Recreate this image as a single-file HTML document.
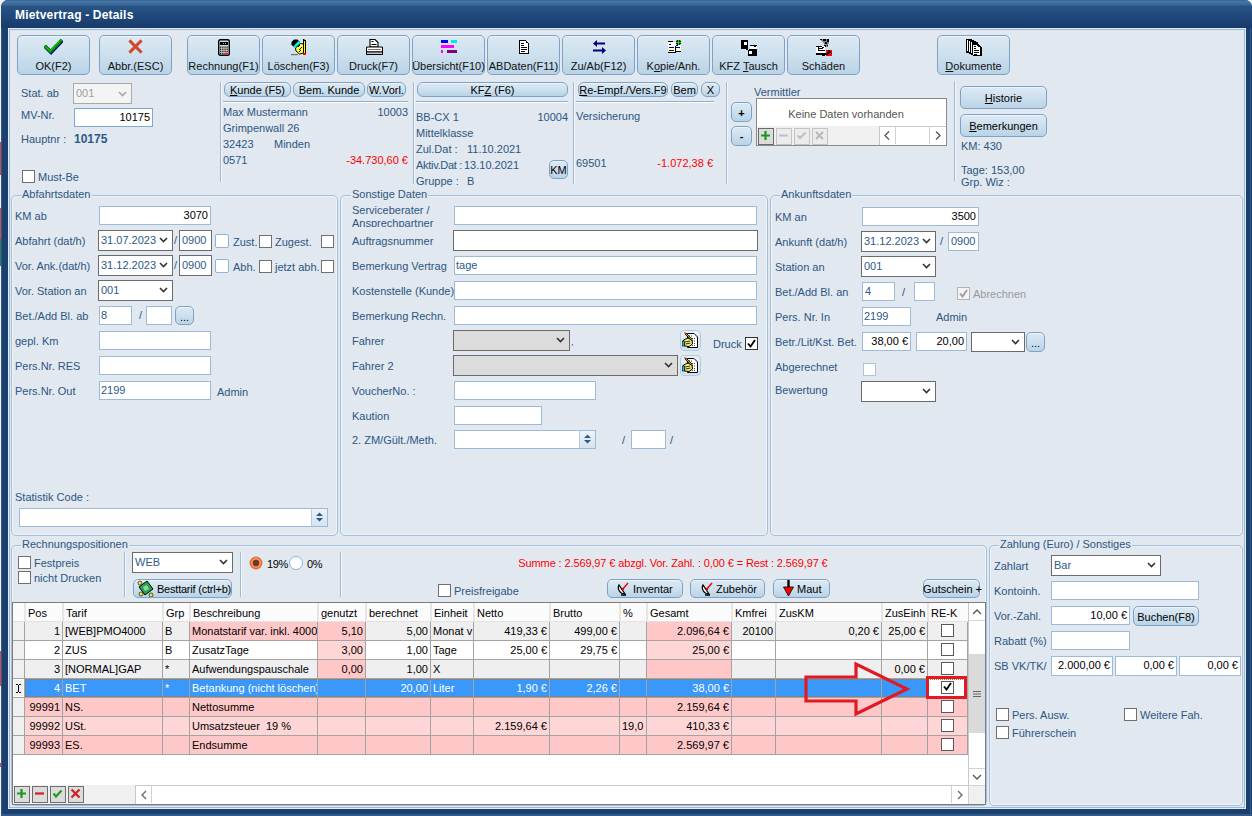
<!DOCTYPE html><html><head><meta charset="utf-8"><style>
*{box-sizing:content-box}
html,body{margin:0;padding:0;width:1252px;height:816px;overflow:hidden;background:#f0f0f0;font-family:"Liberation Sans", sans-serif}
.t{position:absolute;white-space:nowrap;line-height:13px;font-size:11px}
.btn{position:absolute;border:1px solid #7ca3c7;background:linear-gradient(#dce9f3,#cde0ee 50%,#b9d3e6);box-shadow:inset 0 1px 0 #eef5fa}
.grp{position:absolute;border:1px solid #a3bfd9;border-radius:5px;box-shadow:inset 0 0 0 1px #eef4f9}
.ico{position:absolute;line-height:0}
</style></head><body>

<div style="position:absolute;left:0px;top:0px;width:1252px;height:816px;background:#f2f2f2"></div>
<div style="position:absolute;left:0px;top:142px;width:1px;height:33px;background:#d04848"></div>
<div style="position:absolute;left:0px;top:208px;width:1px;height:31px;background:#d05050"></div>
<div style="position:absolute;left:0px;top:239px;width:1px;height:27px;background:#2a7a5a"></div>
<div style="position:absolute;left:0px;top:651px;width:1px;height:35px;background:#d84848"></div>
<div style="position:absolute;left:0px;top:763px;width:1px;height:4px;background:#d84848"></div>
<div style="position:absolute;left:1px;top:0px;width:1251px;height:816px;background:#1b3f6e;border-radius:7px 7px 0 0"></div>
<div style="position:absolute;left:1px;top:0px;width:1251px;height:28px;background:linear-gradient(#2b5580 0px,#4a7aaa 1px,#3f6e9e 3px,#3a699a 5px,#285483 6px,#234d7f 12px,#1d4476 20px,#173a69 28px);border-radius:7px 7px 0 0"></div>
<div style="position:absolute;left:1px;top:28px;width:1px;height:788px;background:#2f5a8a"></div>
<div style="position:absolute;left:1250px;top:28px;width:1px;height:788px;background:#2f5a8a"></div>
<div style="position:absolute;left:1px;top:814px;width:1251px;height:2px;background:#2f5a8a"></div>
<div class="t" style="left:15px;top:9px;color:#ffffff;font-weight:bold;font-size:12px;letter-spacing:0.18px">Mietvertrag - Details</div>
<div style="position:absolute;left:8px;top:28px;width:1238px;height:781px;background:#e4eef7"></div>
<div style="position:absolute;left:9px;top:29px;width:1236px;height:779px;background:#97b7d6"></div>
<div style="position:absolute;left:10px;top:30px;width:1234px;height:777px;background:#e1e8f0"></div>
<div class="btn" style="left:17px;top:35px;width:71px;height:38px;border-radius:5px"></div>
<div class="t" style="left:-246.5px;width:600px;text-align:center;top:60px;color:#111;font-size:11px;">OK(F2)</div>
<div class="btn" style="left:99px;top:35px;width:71px;height:38px;border-radius:5px"></div>
<div class="t" style="left:-164.5px;width:600px;text-align:center;top:60px;color:#111;font-size:11px;">Abbr.(ESC)</div>
<div class="btn" style="left:187px;top:35px;width:71px;height:38px;border-radius:5px"></div>
<div class="t" style="left:-76.5px;width:600px;text-align:center;top:60px;color:#111;font-size:11px;">Rechnung(F1)</div>
<div class="btn" style="left:262px;top:35px;width:71px;height:38px;border-radius:5px"></div>
<div class="t" style="left:-1.5px;width:600px;text-align:center;top:60px;color:#111;font-size:11px;">Löschen(F3)</div>
<div class="btn" style="left:337px;top:35px;width:71px;height:38px;border-radius:5px"></div>
<div class="t" style="left:73.5px;width:600px;text-align:center;top:60px;color:#111;font-size:11px;">Druck(F7)</div>
<div class="btn" style="left:412px;top:35px;width:71px;height:38px;border-radius:5px"></div>
<div class="t" style="left:148.5px;width:600px;text-align:center;top:60px;color:#111;font-size:11px;">Übersicht(F10)</div>
<div class="btn" style="left:487px;top:35px;width:71px;height:38px;border-radius:5px"></div>
<div class="t" style="left:223.5px;width:600px;text-align:center;top:60px;color:#111;font-size:11px;">ABDaten(F11)</div>
<div class="btn" style="left:562px;top:35px;width:71px;height:38px;border-radius:5px"></div>
<div class="t" style="left:298.5px;width:600px;text-align:center;top:60px;color:#111;font-size:11px;">Zu/Ab(F12)</div>
<div class="btn" style="left:637px;top:35px;width:71px;height:38px;border-radius:5px"></div>
<div class="t" style="left:373.5px;width:600px;text-align:center;top:60px;color:#111;font-size:11px;">K<u>o</u>pie/Anh.</div>
<div class="btn" style="left:712px;top:35px;width:71px;height:38px;border-radius:5px"></div>
<div class="t" style="left:448.5px;width:600px;text-align:center;top:60px;color:#111;font-size:11px;">KFZ <u>T</u>ausch</div>
<div class="btn" style="left:787px;top:35px;width:71px;height:38px;border-radius:5px"></div>
<div class="t" style="left:523.5px;width:600px;text-align:center;top:60px;color:#111;font-size:11px;">Schäden</div>
<div class="btn" style="left:937px;top:35px;width:71px;height:38px;border-radius:5px"></div>
<div class="t" style="left:673.5px;width:600px;text-align:center;top:60px;color:#111;font-size:11px;"><u>D</u>okumente</div>
<div class="ico" style="left:44px;top:38px"><svg width="19" height="17" viewBox="0 0 19 17"><path d="M2.2 9.6 L7 14.4 L17.2 3.8" stroke="#000080" stroke-width="3.6" fill="none" stroke-linecap="square"/><path d="M1.6 9 L6.4 13.6 L16.6 3" stroke="#0a8a0a" stroke-width="3.2" fill="none" stroke-linecap="square"/><path d="M1.2 8.4 L6.2 12.8 L16.2 2.4" stroke="#00e000" stroke-width="1" fill="none"/></svg></div>
<div class="ico" style="left:128px;top:39px"><svg width="15" height="15" viewBox="0 0 15 15"><path d="M2.5 2.5 L12.5 12.5 M12.5 2.5 L2.5 12.5" stroke="#d4482a" stroke-width="3.1" stroke-linecap="square"/></svg></div>
<div class="ico" style="left:218px;top:39px"><svg width="12" height="17" viewBox="0 0 12 17"><rect x="0.7" y="0.7" width="10.6" height="15.6" rx="1.5" fill="#d8d8d8" stroke="#000" stroke-width="1.4"/><rect x="2" y="3" width="8" height="3" fill="#000"/><rect x="5" y="4" width="1" height="1" fill="#0ff"/><rect x="7" y="4" width="1" height="1" fill="#0ff"/><g fill="#111"><rect x="2" y="7.5" width="1.3" height="1.3"/><rect x="4.2" y="7.5" width="1.3" height="1.3"/><rect x="6.4" y="7.5" width="1.3" height="1.3"/><rect x="8.5" y="7.5" width="1.3" height="1.3"/><rect x="2" y="9.6" width="1.3" height="1.3"/><rect x="4.2" y="9.6" width="1.3" height="1.3"/><rect x="6.4" y="9.6" width="1.3" height="1.3"/><rect x="8.5" y="9.6" width="1.3" height="1.3"/><rect x="2" y="11.7" width="1.3" height="1.3"/><rect x="4.2" y="11.7" width="1.3" height="1.3"/><rect x="6.4" y="11.7" width="1.3" height="1.3"/><rect x="8.5" y="11.7" width="1.3" height="1.3"/><rect x="2" y="13.8" width="1.3" height="1.3"/><rect x="4.2" y="13.8" width="1.3" height="1.3"/></g><rect x="6.2" y="13.8" width="3.6" height="1.3" fill="#f00"/></svg></div>
<div class="ico" style="left:291px;top:39px"><svg width="17" height="17" viewBox="0 0 17 17"><path d="M0.5 3 L3 0.5 L6.5 0.5 L9 3 L4 8.5 L0.5 6 Z" fill="#000"/><path d="M2.5 7 L7.5 2 L10 4.5 L5 9.5 Z" fill="#00f0f0"/><path d="M4.5 9 L9.5 4.5 L12.5 5 L12.5 14 L8.5 15 L5 12 Z" fill="#ffff40" stroke="#000" stroke-width="1"/><path d="M7 8 L9 6 M8 11 L11 8 M8 13 L10 11" stroke="#000" stroke-width="1"/><rect x="12.5" y="1.5" width="2" height="13" fill="#ffff00" stroke="#000" stroke-width="1"/><rect x="12" y="0" width="1.5" height="2" fill="#000"/><rect x="12" y="14" width="3" height="2" fill="#ff0000"/><rect x="0" y="15" width="7" height="1.2" fill="#707070"/></svg></div>
<div class="ico" style="left:366px;top:39px"><svg width="17" height="16" viewBox="0 0 17 16"><path d="M4 0.5 L9 0.5 L12 3.5 L12 8 L4 8 Z" fill="#fff" stroke="#000" stroke-width="1.1"/><rect x="5.5" y="2" width="2" height="1" fill="#000"/><rect x="5.5" y="5" width="5" height="1" fill="#000"/><rect x="0.5" y="8" width="16" height="5" rx="1" fill="#fff" stroke="#000" stroke-width="1.1"/><rect x="2" y="10" width="12" height="1" fill="#777"/><rect x="13.5" y="10" width="1" height="1" fill="#e00"/><rect x="0.5" y="13" width="16" height="2.5" fill="#ccc" stroke="#000" stroke-width="1"/></svg></div>
<div class="ico" style="left:441px;top:40px"><svg width="17" height="14" viewBox="0 0 17 14"><rect x="0" y="0" width="7" height="3" fill="#0000ee"/><rect x="10" y="0" width="6" height="3" fill="#00e8f0"/><rect x="0" y="5" width="13" height="3" fill="#ff00ff"/><rect x="0" y="10" width="2" height="3" fill="#ff00ff"/><rect x="6" y="10" width="10" height="3" fill="#800080"/></svg></div>
<div class="ico" style="left:519px;top:40px"><svg width="11" height="14" viewBox="0 0 11 14" shape-rendering="crispEdges"><path d="M0 0 H7 V1 H8 V2 H9 V3 H10 V14 H0 Z" fill="#000"/><path d="M1 1 H7 V3 H9 V13 H1 Z" fill="#fff"/><g fill="#000"><rect x="2" y="3" width="3" height="1"/><rect x="2" y="5" width="3" height="1"/><rect x="2" y="7" width="6" height="1"/><rect x="2" y="9" width="6" height="1"/><rect x="2" y="11" width="4" height="1"/><rect x="7" y="2" width="1" height="1"/></g></svg></div>
<div class="ico" style="left:593px;top:40px"><svg width="13" height="14" viewBox="0 0 13 14"><path d="M0 3.5 L4 0 L4 2.5 L12 2.5 L12 4.5 L4 4.5 L4 7 Z" fill="#000080"/><path d="M13 10.5 L9 7 L9 9.5 L0 9.5 L0 11.5 L9 11.5 L9 14 Z" fill="#000080"/></svg></div>
<div class="ico" style="left:668px;top:40px"><svg width="14" height="14" viewBox="0 0 14 14" shape-rendering="crispEdges"><rect x="0" y="1" width="5" height="1" fill="#000"/><rect x="0" y="2" width="8" height="10" fill="#fff"/><rect x="0" y="12" width="8" height="1" fill="#000"/><rect x="7" y="6" width="1" height="7" fill="#000"/><rect x="8" y="4" width="5" height="7" fill="#fff"/><rect x="8" y="11" width="5" height="1" fill="#000"/><g fill="#000080"><rect x="1" y="4" width="2" height="1"/><rect x="1" y="7" width="5" height="1"/><rect x="1" y="10" width="5" height="1"/><rect x="8" y="7" width="4" height="1"/><rect x="8" y="5" width="2" height="1"/></g><g fill="#ffff00"><rect x="2" y="2" width="1" height="1"/><rect x="0" y="8" width="1" height="1"/><rect x="2" y="9" width="1" height="1"/><rect x="5" y="9" width="1" height="1"/><rect x="0" y="11" width="1" height="1"/><rect x="8" y="9" width="1" height="1"/><rect x="11" y="8" width="1" height="1"/></g><rect x="8" y="0" width="5" height="5" rx="2" fill="#000" shape-rendering="auto"/><rect x="10" y="0" width="1" height="5" fill="#00f000"/><rect x="8" y="2" width="5" height="1" fill="#00f000"/></svg></div>
<div class="ico" style="left:741px;top:39px"><svg width="17" height="17" viewBox="0 0 17 17" shape-rendering="crispEdges"><rect x="0" y="1" width="7" height="9" fill="#000"/><rect x="3" y="3" width="3" height="3" fill="#fff"/><rect x="5" y="9" width="2" height="2" fill="#000"/><rect x="9" y="6" width="7" height="1" fill="#000"/><rect x="9" y="7" width="7" height="3" fill="#fff"/><rect x="8" y="10" width="8" height="7" fill="#000"/><rect x="7" y="11" width="2" height="6" fill="#000"/><rect x="8" y="12" width="3" height="3" fill="#fff"/><rect x="13" y="6" width="2" height="2" fill="#000"/></svg></div>
<div class="ico" style="left:816px;top:38px"><svg width="17" height="18" viewBox="0 0 17 18" shape-rendering="crispEdges"><path d="M4 1 H13 V4 L12 9 H10 L8 6 L6 4 L4 2 Z" fill="#888"/><g fill="#000"><rect x="4" y="1" width="2" height="1"/><rect x="7" y="1" width="3" height="2"/><rect x="11" y="1" width="2" height="3"/><rect x="9" y="4" width="2" height="2"/><rect x="8" y="7" width="2" height="2"/><rect x="11" y="7" width="1" height="1"/></g><rect x="0" y="8" width="9" height="8" fill="#fff"/><rect x="0" y="8" width="6" height="1" fill="#000"/><rect x="2" y="9" width="1" height="4" fill="#000"/><rect x="3" y="10" width="4" height="1" fill="#000"/><rect x="3" y="12" width="6" height="1" fill="#000"/><rect x="6" y="9" width="2" height="1" fill="#000"/><rect x="0" y="15" width="10" height="2" fill="#000"/><rect x="6" y="17" width="3" height="1" fill="#000"/><path d="M10 12 H16 V18 H10 Z" fill="#f00"/><g fill="#000"><rect x="12" y="12" width="2" height="1"/><rect x="11" y="14" width="2" height="2"/><rect x="13" y="13" width="2" height="2"/><rect x="15" y="15" width="1" height="1"/><rect x="10" y="16" width="2" height="1"/></g></svg></div>
<div class="ico" style="left:966px;top:39px"><svg width="17" height="17" viewBox="0 0 17 17" shape-rendering="crispEdges"><path d="M0 0 H6 V1 H8 V2 H10 V3 H12 V5 H13 V6 H14 V7 H15 V8 H16 V17 H7 V16 H5 V15 H3 V14 H0 Z" fill="#000"/><rect x="1" y="1" width="1" height="11" fill="#fff"/><rect x="3" y="2" width="1" height="11" fill="#fff"/><rect x="5" y="3" width="1" height="11" fill="#fff"/><path d="M7 6 H11 V7 H12 V8 H14 V16 H7 Z" fill="#fff"/><g fill="#000"><rect x="8" y="7" width="2" height="1"/><rect x="8" y="9" width="2" height="1"/><rect x="8" y="11" width="5" height="1"/><rect x="8" y="13" width="5" height="1"/><rect x="8" y="15" width="3" height="1"/></g></svg></div>
<div class="t" style="left:21px;top:87px;color:#2d5682;font-size:11px;">Stat. ab</div>
<div style="position:absolute;left:73px;top:83px;width:57px;height:19px;border:1px solid #a9a9a9;background:#f4f4f4"></div>
<div class="ico" style="left:118px;top:91px"><svg width="9" height="6" viewBox="0 0 9 6"><path d="M1 1 L4.5 4.5 L8 1" stroke="#a8a8a8" stroke-width="1.6" fill="none"/></svg></div>
<div class="t" style="left:76px;top:87px;color:#a0a0a0;font-size:11px;">001</div>
<div class="t" style="left:21px;top:109px;color:#2d5682;font-size:11px;">MV-Nr.</div>
<div style="position:absolute;left:74px;top:108px;width:77px;height:17px;border:1px solid #7fa7cf;background:#fff"></div>
<div class="t" style="right:1102px;top:111px;color:#000;font-size:11px;">10175</div>
<div class="t" style="left:21px;top:133px;color:#2d5682;font-size:11px;">Hauptnr :</div>
<div class="t" style="left:74px;top:133px;color:#2d5a88;font-weight:bold;font-size:12px;">10175</div>
<div style="position:absolute;left:22px;top:170px;width:11px;height:11px;border:1px solid #707070;background:#fff;border-radius:0px"></div>
<div class="t" style="left:38px;top:171px;color:#2d5682;font-size:11px;">Must-Be</div>
<div style="position:absolute;left:220px;top:82px;width:1px;height:100px;background:#9db9d5;box-shadow:1px 0 0 #f4f8fb"></div>
<div style="position:absolute;left:413px;top:82px;width:1px;height:102px;background:#9db9d5;box-shadow:1px 0 0 #f4f8fb"></div>
<div style="position:absolute;left:573px;top:82px;width:1px;height:102px;background:#9db9d5;box-shadow:1px 0 0 #f4f8fb"></div>
<div style="position:absolute;left:726px;top:82px;width:1px;height:102px;background:#9db9d5;box-shadow:1px 0 0 #f4f8fb"></div>
<div style="position:absolute;left:954px;top:81px;width:1px;height:100px;background:#9db9d5;box-shadow:1px 0 0 #f4f8fb"></div>
<div class="btn" style="left:224px;top:82px;width:65px;height:13px;border-radius:6px"></div>
<div class="t" style="left:-42.5px;width:600px;text-align:center;top:84px;color:#000;font-size:11px;"><u>K</u>unde (F5)</div>
<div class="btn" style="left:293px;top:82px;width:70px;height:13px;border-radius:6px"></div>
<div class="t" style="left:29px;width:600px;text-align:center;top:84px;color:#000;font-size:11px;">Bem. Kunde</div>
<div class="btn" style="left:367px;top:82px;width:37px;height:13px;border-radius:6px"></div>
<div class="t" style="left:86.5px;width:600px;text-align:center;top:84px;color:#000;font-size:11px;">W.Vorl.</div>
<div style="position:absolute;left:223px;top:101px;width:185px;height:1px;background:#8eb0d0;box-shadow:0 1px 0 #fbfdff"></div>
<div class="t" style="left:223px;top:106px;color:#2d5682;font-size:11px;">Max Mustermann</div>
<div class="t" style="right:844px;top:106px;color:#2d5682;font-size:11px;">10003</div>
<div class="t" style="left:223px;top:122px;color:#2d5682;font-size:11px;">Grimpenwall 26</div>
<div class="t" style="left:223px;top:138px;color:#2d5682;font-size:11px;">32423</div>
<div class="t" style="left:274px;top:138px;color:#2d5682;font-size:11px;">Minden</div>
<div class="t" style="left:223px;top:154px;color:#2d5682;font-size:11px;">0571</div>
<div class="t" style="right:844px;top:154px;color:#ff0000;font-size:11px;">-34.730,60 €</div>
<div class="btn" style="left:417px;top:82px;width:149px;height:13px;border-radius:6px"></div>
<div class="t" style="left:192.5px;width:600px;text-align:center;top:84px;color:#000;font-size:11px;">KF<u>Z</u> (F6)</div>
<div style="position:absolute;left:416px;top:101px;width:152px;height:1px;background:#8eb0d0;box-shadow:0 1px 0 #fbfdff"></div>
<div class="t" style="left:416px;top:111px;color:#2d5682;font-size:11px;">BB-CX 1</div>
<div class="t" style="right:684px;top:111px;color:#2d5682;font-size:11px;">10004</div>
<div class="t" style="left:416px;top:127px;color:#2d5682;font-size:11px;">Mittelklasse</div>
<div class="t" style="left:416px;top:143px;color:#2d5682;font-size:11px;">Zul.Dat :</div>
<div class="t" style="left:467px;top:143px;color:#2d5682;font-size:11px;">11.10.2021</div>
<div class="t" style="left:416px;top:159px;color:#2d5682;font-size:11px;letter-spacing:-0.3px">Aktiv.Dat :</div>
<div class="t" style="left:464px;top:159px;color:#2d5682;font-size:11px;">13.10.2021</div>
<div class="t" style="left:416px;top:175px;color:#2d5682;font-size:11px;">Gruppe :</div>
<div class="t" style="left:467px;top:175px;color:#2d5682;font-size:11px;">B</div>
<div class="btn" style="left:549px;top:160px;width:17px;height:17px;border-radius:5px"></div>
<div class="t" style="left:258.5px;width:600px;text-align:center;top:164px;color:#000;font-size:11px;">KM</div>
<div class="btn" style="left:578px;top:82px;width:88px;height:13px;border-radius:6px"></div>
<div class="t" style="left:323px;width:600px;text-align:center;top:84px;color:#000;font-size:11px;"><u>R</u>e-Empf./Vers.F9</div>
<div class="btn" style="left:671px;top:82px;width:25px;height:13px;border-radius:6px"></div>
<div class="t" style="left:384.5px;width:600px;text-align:center;top:84px;color:#000;font-size:11px;">Bem</div>
<div class="btn" style="left:701px;top:82px;width:17px;height:13px;border-radius:6px"></div>
<div class="t" style="left:410.5px;width:600px;text-align:center;top:84px;color:#000;font-size:11px;">X</div>
<div style="position:absolute;left:576px;top:101px;width:138px;height:1px;background:#8eb0d0;box-shadow:0 1px 0 #fbfdff"></div>
<div class="t" style="left:576px;top:110px;color:#2d5682;font-size:11px;">Versicherung</div>
<div class="t" style="left:576px;top:157px;color:#2d5682;font-size:11px;">69501</div>
<div class="t" style="right:539px;top:157px;color:#ff0000;font-size:11px;">-1.072,38 €</div>
<div class="btn" style="left:731px;top:102px;width:19px;height:18px;border-radius:5px"></div>
<div class="t" style="left:441.5px;width:600px;text-align:center;top:107px;color:#000;font-weight:bold;font-size:11px;">+</div>
<div class="btn" style="left:731px;top:126px;width:19px;height:18px;border-radius:5px"></div>
<div class="t" style="left:441.5px;width:600px;text-align:center;top:130px;color:#000;font-weight:bold;font-size:11px;">-</div>
<div class="t" style="left:754px;top:86px;color:#2d5682;font-size:11px;">Vermittler</div>
<div style="position:absolute;left:756px;top:98px;width:189px;height:46px;border:1px solid #8a8a8a;background:#fff"></div>
<div class="t" style="left:546px;width:600px;text-align:center;top:108px;color:#555;font-size:11px;">Keine Daten vorhanden</div>
<div style="position:absolute;left:757px;top:126px;width:189px;height:19px;background:#f0f0f0"></div>
<div style="position:absolute;left:758px;top:128px;width:14px;height:15px;border:1px solid #6a6a6a;background:#dcdcdc"></div>
<div class="ico" style="left:760px;top:130px"><svg width="11" height="11" viewBox="0 0 11 11"><path d="M5.5 1 V10 M1 5.5 H10" stroke="#1a9a1a" stroke-width="2.2"/></svg></div>
<div style="position:absolute;left:776px;top:128px;width:14px;height:15px;border:1px solid #c4c4c4;background:#ececec"></div>
<div style="position:absolute;left:794px;top:128px;width:14px;height:15px;border:1px solid #c4c4c4;background:#ececec"></div>
<div style="position:absolute;left:812px;top:128px;width:14px;height:15px;border:1px solid #c4c4c4;background:#ececec"></div>
<div class="ico" style="left:778px;top:130px"><svg width="11" height="11" viewBox="0 0 11 11"><path d="M1 5.5 H10" stroke="#c0c0c0" stroke-width="2"/></svg></div>
<div class="ico" style="left:796px;top:130px"><svg width="11" height="11" viewBox="0 0 11 11"><path d="M1.5 5.5 L4 8 L9.5 2.5" stroke="#c0c0c0" stroke-width="2" fill="none"/></svg></div>
<div class="ico" style="left:814px;top:130px"><svg width="11" height="11" viewBox="0 0 11 11"><path d="M2 2 L9 9 M9 2 L2 9" stroke="#b8b8b8" stroke-width="2"/></svg></div>
<div style="position:absolute;left:879px;top:126px;width:66px;height:18px;background:#fff;border-left:1px solid #c8c8c8;border-top:1px solid #c8c8c8"></div>
<div style="position:absolute;left:895px;top:126px;width:1px;height:18px;background:#d0d0d0"></div>
<div style="position:absolute;left:929px;top:126px;width:1px;height:18px;background:#d0d0d0"></div>
<div class="ico" style="left:884px;top:131px"><svg width="6" height="9" viewBox="0 0 6 9"><path d="M5 0.5 L1 4.5 L5 8.5" stroke="#555" stroke-width="1.3" fill="none"/></svg></div>
<div class="ico" style="left:935px;top:131px"><svg width="6" height="9" viewBox="0 0 6 9"><path d="M1 0.5 L5 4.5 L1 8.5" stroke="#555" stroke-width="1.3" fill="none"/></svg></div>
<div class="btn" style="left:960px;top:86px;width:85px;height:21px;border-radius:5px"></div>
<div class="t" style="left:703.5px;width:600px;text-align:center;top:92px;color:#000;font-size:11px;"><u>H</u>istorie</div>
<div class="btn" style="left:960px;top:114px;width:85px;height:21px;border-radius:5px"></div>
<div class="t" style="left:703.5px;width:600px;text-align:center;top:120px;color:#000;font-size:11px;"><u>B</u>emerkungen</div>
<div class="t" style="left:961px;top:140px;color:#2d5682;font-size:11px;">KM: 430</div>
<div class="t" style="left:961px;top:164px;color:#2d5682;font-size:11px;">Tage: 153,00</div>
<div class="t" style="left:961px;top:176px;color:#2d5682;font-size:11px;">Grp. Wiz :</div>
<div class="grp" style="left:11px;top:195px;width:325px;height:339px"></div>
<div class="t" style="left:22px;top:188px;color:#2d5682;font-size:11px;margin-left:-1px"><span style="background:#e1e8f0;padding:0 1px">Abfahrtsdaten</span></div>
<div class="grp" style="left:340px;top:195px;width:426px;height:339px"></div>
<div class="t" style="left:352px;top:188px;color:#2d5682;font-size:11px;margin-left:-1px"><span style="background:#e1e8f0;padding:0 1px">Sonstige Daten</span></div>
<div class="grp" style="left:770px;top:195px;width:471px;height:339px"></div>
<div class="t" style="left:781px;top:188px;color:#2d5682;font-size:11px;margin-left:-1px"><span style="background:#e1e8f0;padding:0 1px">Ankunftsdaten</span></div>
<div class="t" style="left:15px;top:210px;color:#2d5682;font-size:11px;">KM ab</div>
<div style="position:absolute;left:99px;top:206px;width:110px;height:17px;border:1px solid #9dbbd8;background:#fff"></div>
<div class="t" style="right:1044px;top:209px;color:#000;font-size:11px;">3070</div>
<div class="t" style="left:15px;top:235px;color:#2d5682;font-size:11px;">Abfahrt (dat/h)</div>
<div style="position:absolute;left:98px;top:230px;width:73px;height:19px;border:1px solid #6b6b6b;background:#fff"></div>
<div style="position:absolute;left:159px;top:237px;line-height:0"><svg width="9" height="6" viewBox="0 0 9 6"><path d="M1 1 L4.5 4.5 L8 1" stroke="#333" stroke-width="1.6" fill="none"/></svg></div>
<div class="t" style="left:101px;top:234px;color:#2d5a88;font-size:11px;">31.07.2023</div>
<div class="t" style="left:174px;top:234px;color:#2d5a88;font-size:11px;">/</div>
<div style="position:absolute;left:179px;top:230px;width:31px;height:19px;border:1px solid #6b6b6b;background:#fff"></div>
<div class="t" style="left:182px;top:234px;color:#2d5a88;font-size:11px;">0900</div>
<div style="position:absolute;left:215px;top:234px;width:12px;height:12px;border:1px solid #8fb3d6;background:#fff;border-radius:2px"></div>
<div class="t" style="left:233px;top:236px;color:#2d5682;font-size:11px;">Zust.</div>
<div style="position:absolute;left:259px;top:235px;width:11px;height:11px;border:1px solid #707070;background:#fff;border-radius:0px"></div>
<div class="t" style="left:275px;top:236px;color:#2d5682;font-size:11px;">Zugest.</div>
<div style="position:absolute;left:321px;top:235px;width:11px;height:11px;border:1px solid #707070;background:#fff;border-radius:0px"></div>
<div class="t" style="left:15px;top:260px;color:#2d5682;font-size:11px;">Vor. Ank.(dat/h)</div>
<div style="position:absolute;left:98px;top:255px;width:73px;height:19px;border:1px solid #6b6b6b;background:#fff"></div>
<div style="position:absolute;left:159px;top:262px;line-height:0"><svg width="9" height="6" viewBox="0 0 9 6"><path d="M1 1 L4.5 4.5 L8 1" stroke="#333" stroke-width="1.6" fill="none"/></svg></div>
<div class="t" style="left:101px;top:259px;color:#2d5a88;font-size:11px;">31.12.2023</div>
<div class="t" style="left:174px;top:259px;color:#2d5a88;font-size:11px;">/</div>
<div style="position:absolute;left:179px;top:255px;width:31px;height:19px;border:1px solid #6b6b6b;background:#fff"></div>
<div class="t" style="left:182px;top:259px;color:#2d5a88;font-size:11px;">0900</div>
<div style="position:absolute;left:215px;top:259px;width:12px;height:12px;border:1px solid #8fb3d6;background:#fff;border-radius:2px"></div>
<div class="t" style="left:233px;top:261px;color:#2d5682;font-size:11px;">Abh.</div>
<div style="position:absolute;left:259px;top:260px;width:11px;height:11px;border:1px solid #707070;background:#fff;border-radius:0px"></div>
<div class="t" style="left:275px;top:261px;color:#2d5682;font-size:11px;">jetzt abh.</div>
<div style="position:absolute;left:321px;top:260px;width:11px;height:11px;border:1px solid #707070;background:#fff;border-radius:0px"></div>
<div class="t" style="left:15px;top:285px;color:#2d5682;font-size:11px;">Vor. Station an</div>
<div style="position:absolute;left:98px;top:280px;width:73px;height:19px;border:1px solid #6b6b6b;background:#fff"></div>
<div style="position:absolute;left:159px;top:287px;line-height:0"><svg width="9" height="6" viewBox="0 0 9 6"><path d="M1 1 L4.5 4.5 L8 1" stroke="#333" stroke-width="1.6" fill="none"/></svg></div>
<div class="t" style="left:101px;top:284px;color:#2d5a88;font-size:11px;">001</div>
<div class="t" style="left:15px;top:310px;color:#2d5682;font-size:11px;">Bet./Add Bl. ab</div>
<div style="position:absolute;left:99px;top:306px;width:31px;height:17px;border:1px solid #9dbbd8;background:#fff"></div>
<div class="t" style="left:101px;top:309px;color:#2d5a88;font-size:11px;">8</div>
<div class="t" style="left:139px;top:309px;color:#2d5a88;font-size:11px;">/</div>
<div style="position:absolute;left:146px;top:306px;width:24px;height:17px;border:1px solid #9dbbd8;background:#fff"></div>
<div class="btn" style="left:175px;top:306px;width:17px;height:17px;border-radius:5px"></div>
<div class="t" style="left:-115.5px;width:600px;text-align:center;top:311px;color:#000;font-size:11px;">...</div>
<div class="t" style="left:15px;top:335px;color:#2d5682;font-size:11px;">gepl. Km</div>
<div style="position:absolute;left:99px;top:331px;width:110px;height:17px;border:1px solid #9dbbd8;background:#fff"></div>
<div class="t" style="left:15px;top:360px;color:#2d5682;font-size:11px;">Pers.Nr. RES</div>
<div style="position:absolute;left:99px;top:356px;width:110px;height:17px;border:1px solid #9dbbd8;background:#fff"></div>
<div class="t" style="left:15px;top:385px;color:#2d5682;font-size:11px;">Pers.Nr. Out</div>
<div style="position:absolute;left:99px;top:381px;width:110px;height:17px;border:1px solid #9dbbd8;background:#fff"></div>
<div class="t" style="left:101px;top:384px;color:#2d5a88;font-size:11px;">2199</div>
<div class="t" style="left:217px;top:386px;color:#2d5682;font-size:11px;">Admin</div>
<div class="t" style="left:15px;top:491px;color:#2d5682;font-size:11px;">Statistik Code :</div>
<div style="position:absolute;left:19px;top:508px;width:307px;height:17px;border:1px solid #9dbbd8;background:#fff"></div>
<div style="position:absolute;left:311px;top:509px;width:15px;height:17px;background:linear-gradient(#eef3f8,#d5e2ee);border-left:1px solid #b5cbe0"></div>
<div class="ico" style="left:315px;top:511px"><svg width="9" height="12" viewBox="0 0 9 12"><path d="M1 5 L4.5 1.5 L8 5 Z M1 7 L4.5 10.5 L8 7 Z" fill="#2d5a88"/></svg></div>
<div class="t" style="left:352px;top:204px;color:#2d5682;font-size:11px;">Serviceberater /</div>
<div style="position:absolute;left:352px;top:218px;width:100px;height:9px;overflow:hidden"><div class="t" style="left:0;top:-1px;color:#2d5682">Ansprechpartner</div></div>
<div style="position:absolute;left:454px;top:206px;width:301px;height:17px;border:1px solid #9dbbd8;background:#fff"></div>
<div class="t" style="left:352px;top:235px;color:#2d5682;font-size:11px;">Auftragsnummer</div>
<div style="position:absolute;left:453px;top:230px;width:303px;height:19px;border:1px solid #6b6b6b;background:#fff"></div>
<div class="t" style="left:352px;top:260px;color:#2d5682;font-size:11px;">Bemerkung Vertrag</div>
<div style="position:absolute;left:454px;top:256px;width:301px;height:17px;border:1px solid #9dbbd8;background:#fff"></div>
<div class="t" style="left:456px;top:259px;color:#2d5a88;font-size:11px;">tage</div>
<div class="t" style="left:352px;top:285px;color:#2d5682;font-size:11px;">Kostenstelle (Kunde)</div>
<div style="position:absolute;left:454px;top:281px;width:301px;height:17px;border:1px solid #9dbbd8;background:#fff"></div>
<div class="t" style="left:352px;top:310px;color:#2d5682;font-size:11px;">Bemerkung Rechn.</div>
<div style="position:absolute;left:454px;top:306px;width:301px;height:17px;border:1px solid #9dbbd8;background:#fff"></div>
<div class="t" style="left:352px;top:335px;color:#2d5682;font-size:11px;">Fahrer</div>
<div style="position:absolute;left:453px;top:330px;width:115px;height:19px;border:1px solid #6b6b6b;background:#dcdcdc"></div>
<div style="position:absolute;left:556px;top:337px;line-height:0"><svg width="9" height="6" viewBox="0 0 9 6"><path d="M1 1 L4.5 4.5 L8 1" stroke="#333" stroke-width="1.6" fill="none"/></svg></div>
<div class="t" style="left:571px;top:336px;color:#2d5682;font-size:9px;">,</div>
<div class="t" style="left:352px;top:360px;color:#2d5682;font-size:11px;">Fahrer 2</div>
<div style="position:absolute;left:453px;top:355px;width:223px;height:19px;border:1px solid #6b6b6b;background:#dcdcdc"></div>
<div style="position:absolute;left:664px;top:362px;line-height:0"><svg width="9" height="6" viewBox="0 0 9 6"><path d="M1 1 L4.5 4.5 L8 1" stroke="#333" stroke-width="1.6" fill="none"/></svg></div>
<div class="t" style="left:713px;top:338px;color:#2d5682;font-size:11px;">Druck</div>
<div style="position:absolute;left:745px;top:337px;width:11px;height:11px;border:1px solid #333;background:#fff;border-radius:0px"></div>
<div class="ico" style="left:747px;top:339px"><svg width="9" height="9" viewBox="0 0 9 9"><path d="M1 4.5 L3.5 7.5 L8 1" stroke="#000" stroke-width="1.8" fill="none"/></svg></div>
<div style="position:absolute;left:680px;top:330px;width:19px;height:19px;background:linear-gradient(#e8f0f7,#d2e1ee);border:1px solid #b3cbe2;border-radius:4px"></div>
<div class="ico" style="left:682px;top:332px"><svg width="17" height="17" viewBox="0 0 17 17"><path d="M5.5 1.5 L12 1.5 L15.5 5 L15.5 15.5 L5.5 15.5 Z" fill="#fff" stroke="#000" stroke-width="1"/><path d="M7 4 H11 M8 6.5 H14 M8 9 H14 M8 11.5 H14 M8 13.5 H14" stroke="#333" stroke-width="0.9" stroke-dasharray="1 1"/><path d="M1.5 8 L6 6 L10 8 L10.5 12 L7 14.5 L2.5 14 Z" fill="#f4f070" stroke="#000" stroke-width="1"/><path d="M3 10 L8 9 M3.5 12 L8.5 11" stroke="#000" stroke-width="0.8"/><rect x="0.5" y="9" width="1.8" height="5" fill="#20c0d0" stroke="#000" stroke-width="0.6"/><path d="M3.5 1.5 L10 8" stroke="#000" stroke-width="1.8"/><path d="M3.8 1.8 L9.7 7.7" stroke="#f0d020" stroke-width="0.8"/><path d="M2.5 0.5 L4 2" stroke="#e02020" stroke-width="1.4"/></svg></div>
<div style="position:absolute;left:680px;top:355px;width:19px;height:19px;background:linear-gradient(#e8f0f7,#d2e1ee);border:1px solid #b3cbe2;border-radius:4px"></div>
<div class="ico" style="left:682px;top:357px"><svg width="17" height="17" viewBox="0 0 17 17"><path d="M5.5 1.5 L12 1.5 L15.5 5 L15.5 15.5 L5.5 15.5 Z" fill="#fff" stroke="#000" stroke-width="1"/><path d="M7 4 H11 M8 6.5 H14 M8 9 H14 M8 11.5 H14 M8 13.5 H14" stroke="#333" stroke-width="0.9" stroke-dasharray="1 1"/><path d="M1.5 8 L6 6 L10 8 L10.5 12 L7 14.5 L2.5 14 Z" fill="#f4f070" stroke="#000" stroke-width="1"/><path d="M3 10 L8 9 M3.5 12 L8.5 11" stroke="#000" stroke-width="0.8"/><rect x="0.5" y="9" width="1.8" height="5" fill="#20c0d0" stroke="#000" stroke-width="0.6"/><path d="M3.5 1.5 L10 8" stroke="#000" stroke-width="1.8"/><path d="M3.8 1.8 L9.7 7.7" stroke="#f0d020" stroke-width="0.8"/><path d="M2.5 0.5 L4 2" stroke="#e02020" stroke-width="1.4"/></svg></div>
<div class="t" style="left:352px;top:385px;color:#2d5682;font-size:11px;">VoucherNo. :</div>
<div style="position:absolute;left:454px;top:381px;width:140px;height:17px;border:1px solid #9dbbd8;background:#fff"></div>
<div class="t" style="left:352px;top:410px;color:#2d5682;font-size:11px;">Kaution</div>
<div style="position:absolute;left:454px;top:406px;width:86px;height:17px;border:1px solid #9dbbd8;background:#fff"></div>
<div class="t" style="left:352px;top:434px;color:#2d5682;font-size:11px;">2. ZM/Gült./Meth.</div>
<div style="position:absolute;left:454px;top:430px;width:140px;height:17px;border:1px solid #9dbbd8;background:#fff"></div>
<div style="position:absolute;left:579px;top:431px;width:15px;height:17px;background:linear-gradient(#eef3f8,#d5e2ee);border-left:1px solid #b5cbe0"></div>
<div class="ico" style="left:583px;top:433px"><svg width="9" height="12" viewBox="0 0 9 12"><path d="M1 5 L4.5 1.5 L8 5 Z M1 7 L4.5 10.5 L8 7 Z" fill="#2d5a88"/></svg></div>
<div class="t" style="left:622px;top:434px;color:#2d5682;font-size:11px;">/</div>
<div style="position:absolute;left:631px;top:430px;width:33px;height:17px;border:1px solid #9dbbd8;background:#fff"></div>
<div class="t" style="left:670px;top:434px;color:#2d5682;font-size:11px;">/</div>
<div class="t" style="left:775px;top:211px;color:#2d5682;font-size:11px;">KM an</div>
<div style="position:absolute;left:862px;top:207px;width:115px;height:17px;border:1px solid #9dbbd8;background:#fff"></div>
<div class="t" style="right:276px;top:210px;color:#000;font-size:11px;">3500</div>
<div class="t" style="left:775px;top:236px;color:#2d5682;font-size:11px;">Ankunft (dat/h)</div>
<div style="position:absolute;left:861px;top:231px;width:73px;height:19px;border:1px solid #6b6b6b;background:#fff"></div>
<div style="position:absolute;left:922px;top:238px;line-height:0"><svg width="9" height="6" viewBox="0 0 9 6"><path d="M1 1 L4.5 4.5 L8 1" stroke="#333" stroke-width="1.6" fill="none"/></svg></div>
<div class="t" style="left:864px;top:235px;color:#2d5a88;font-size:11px;">31.12.2023</div>
<div class="t" style="left:940px;top:235px;color:#2d5a88;font-size:11px;">/</div>
<div style="position:absolute;left:948px;top:232px;width:29px;height:17px;border:1px solid #9dbbd8;background:#fff"></div>
<div class="t" style="left:951px;top:235px;color:#2d5a88;font-size:11px;">0900</div>
<div class="t" style="left:775px;top:261px;color:#2d5682;font-size:11px;">Station an</div>
<div style="position:absolute;left:861px;top:256px;width:73px;height:19px;border:1px solid #6b6b6b;background:#fff"></div>
<div style="position:absolute;left:922px;top:263px;line-height:0"><svg width="9" height="6" viewBox="0 0 9 6"><path d="M1 1 L4.5 4.5 L8 1" stroke="#333" stroke-width="1.6" fill="none"/></svg></div>
<div class="t" style="left:864px;top:260px;color:#2d5a88;font-size:11px;">001</div>
<div class="t" style="left:775px;top:286px;color:#2d5682;font-size:11px;">Bet./Add Bl. an</div>
<div style="position:absolute;left:862px;top:282px;width:31px;height:17px;border:1px solid #9dbbd8;background:#fff"></div>
<div class="t" style="left:865px;top:285px;color:#2d5a88;font-size:11px;">4</div>
<div class="t" style="left:902px;top:286px;color:#2d5a88;font-size:11px;">/</div>
<div style="position:absolute;left:914px;top:282px;width:19px;height:17px;border:1px solid #9dbbd8;background:#fff"></div>
<div style="position:absolute;left:957px;top:287px;width:11px;height:11px;border:1px solid #b4b4b4;background:#f4f4f4;border-radius:0px"></div>
<div class="ico" style="left:959px;top:289px"><svg width="9" height="9" viewBox="0 0 9 9"><path d="M1 4.5 L3.5 7.5 L8 1" stroke="#9a9a9a" stroke-width="1.8" fill="none"/></svg></div>
<div class="t" style="left:973px;top:288px;color:#9a9a9a;font-size:11px;">Abrechnen</div>
<div class="t" style="left:775px;top:311px;color:#2d5682;font-size:11px;">Pers. Nr. In</div>
<div style="position:absolute;left:862px;top:307px;width:47px;height:17px;border:1px solid #9dbbd8;background:#fff"></div>
<div class="t" style="left:864px;top:310px;color:#2d5a88;font-size:11px;">2199</div>
<div class="t" style="left:936px;top:311px;color:#2d5682;font-size:11px;">Admin</div>
<div class="t" style="left:775px;top:336px;color:#2d5682;font-size:11px;">Betr./Lit/Kst. Bet.</div>
<div style="position:absolute;left:862px;top:332px;width:47px;height:17px;border:1px solid #9dbbd8;background:#fff"></div>
<div class="t" style="right:344px;top:335px;color:#000;font-size:11px;">38,00 €</div>
<div style="position:absolute;left:916px;top:332px;width:49px;height:17px;border:1px solid #9dbbd8;background:#fff"></div>
<div class="t" style="right:288px;top:335px;color:#000;font-size:11px;">20,00</div>
<div style="position:absolute;left:971px;top:332px;width:52px;height:18px;border:1px solid #6b6b6b;background:#fff"></div>
<div style="position:absolute;left:1011px;top:339px;line-height:0"><svg width="9" height="6" viewBox="0 0 9 6"><path d="M1 1 L4.5 4.5 L8 1" stroke="#333" stroke-width="1.6" fill="none"/></svg></div>
<div class="btn" style="left:1026px;top:332px;width:17px;height:18px;border-radius:5px"></div>
<div class="t" style="left:735.5px;width:600px;text-align:center;top:337px;color:#000;font-size:11px;">...</div>
<div class="t" style="left:775px;top:361px;color:#2d5682;font-size:11px;">Abgerechnet</div>
<div style="position:absolute;left:863px;top:363px;width:11px;height:11px;border:1px solid #b0c4d8;background:#fff;border-radius:0px"></div>
<div class="t" style="left:775px;top:384px;color:#2d5682;font-size:11px;">Bewertung</div>
<div style="position:absolute;left:861px;top:381px;width:73px;height:19px;border:1px solid #6b6b6b;background:#fff"></div>
<div style="position:absolute;left:922px;top:388px;line-height:0"><svg width="9" height="6" viewBox="0 0 9 6"><path d="M1 1 L4.5 4.5 L8 1" stroke="#333" stroke-width="1.6" fill="none"/></svg></div>
<div class="grp" style="left:11px;top:545px;width:974px;height:259px"></div>
<div class="t" style="left:22px;top:538px;color:#2d5682;font-size:11px;margin-left:-1px"><span style="background:#e1e8f0;padding:0 1px">Rechnungspositionen</span></div>
<div class="grp" style="left:989px;top:545px;width:252px;height:259px"></div>
<div class="t" style="left:1000px;top:538px;color:#2d5682;font-size:11px;margin-left:-1px"><span style="background:#e1e8f0;padding:0 1px">Zahlung (Euro) / Sonstiges</span></div>
<div style="position:absolute;left:18px;top:556px;width:11px;height:11px;border:1px solid #707070;background:#fff;border-radius:0px"></div>
<div class="t" style="left:34px;top:557px;color:#2d5682;font-size:11px;">Festpreis</div>
<div style="position:absolute;left:18px;top:571px;width:11px;height:11px;border:1px solid #707070;background:#fff;border-radius:0px"></div>
<div class="t" style="left:34px;top:572px;color:#2d5682;font-size:11px;">nicht Drucken</div>
<div style="position:absolute;left:124px;top:552px;width:1px;height:45px;background:#9db9d5;box-shadow:1px 0 0 #f4f8fb"></div>
<div style="position:absolute;left:132px;top:552px;width:99px;height:19px;border:1px solid #6b6b6b;background:#fff"></div>
<div style="position:absolute;left:219px;top:559px;line-height:0"><svg width="9" height="6" viewBox="0 0 9 6"><path d="M1 1 L4.5 4.5 L8 1" stroke="#333" stroke-width="1.6" fill="none"/></svg></div>
<div class="t" style="left:135px;top:556px;color:#2d5a88;font-size:11px;">WEB</div>
<div class="btn" style="left:133px;top:579px;width:97px;height:17px;border-radius:5px"></div>
<div class="t" style="left:157px;top:583px;color:#000;font-size:11px;letter-spacing:-0.22px">Besttarif (ctrl+b)</div>
<div class="ico" style="left:137px;top:580px"><svg width="18" height="17" viewBox="0 0 18 17"><path d="M2 7 L10 1 L16 9 L8 15 Z" fill="#2aa050" stroke="#000" stroke-width="1"/><path d="M6 7 L10 5 L12 9 L8 11Z" fill="#80e090"/><circle cx="3" cy="3" r="2" fill="#f0e040" stroke="#000" stroke-width="0.6"/><circle cx="4" cy="14" r="2" fill="#f0e040" stroke="#000" stroke-width="0.6"/><circle cx="14" cy="15" r="2" fill="#f0e040" stroke="#000" stroke-width="0.6"/></svg></div>
<div style="position:absolute;left:240px;top:552px;width:1px;height:45px;background:#9db9d5;box-shadow:1px 0 0 #f4f8fb"></div>
<div class="ico" style="left:249px;top:556px"><svg width="14" height="14" viewBox="0 0 14 14"><circle cx="7" cy="7" r="6.5" fill="#e8703c"/><circle cx="7" cy="7" r="5" fill="#f59066"/><circle cx="7" cy="7" r="3.2" fill="#6e3a1e"/></svg></div>
<div class="t" style="left:267px;top:558px;color:#000;font-size:11px;letter-spacing:-0.4px">19%</div>
<div style="position:absolute;left:289px;top:556px;width:12px;height:12px;border-radius:50%;background:#fff;border:1px solid #8fb3d6"></div>
<div class="t" style="left:307px;top:558px;color:#000;font-size:11px;letter-spacing:-0.4px">0%</div>
<div style="position:absolute;left:340px;top:552px;width:1px;height:45px;background:#9db9d5;box-shadow:1px 0 0 #f4f8fb"></div>
<div class="t" style="left:373px;width:600px;text-align:center;top:557px;color:#ff0000;font-size:11px;letter-spacing:-0.12px">Summe : 2.569,97 € abzgl. Vor. Zahl. : 0,00 € = Rest : 2.569,97 €</div>
<div style="position:absolute;left:438px;top:584px;width:11px;height:11px;border:1px solid #707070;background:#fff;border-radius:0px"></div>
<div class="t" style="left:454px;top:585px;color:#2d5682;font-size:11px;">Preisfreigabe</div>
<div class="btn" style="left:607px;top:579px;width:74px;height:17px;border-radius:5px"></div>
<div class="ico" style="left:617px;top:582px"><svg width="13" height="14" viewBox="0 0 13 14"><path d="M2 3 C0 7 3 12 8 12 Z" fill="#fff" stroke="#000" stroke-width="1.3"/><path d="M4 13 L9 13" stroke="#000" stroke-width="1.5"/><path d="M5 8 L11 1" stroke="#e00" stroke-width="1.4"/><circle cx="6" cy="7" r="1.2" fill="#e00"/></svg></div>
<div class="t" style="left:633px;top:583px;color:#000;font-size:11px;">Inventar</div>
<div class="btn" style="left:690px;top:579px;width:73px;height:17px;border-radius:5px"></div>
<div class="ico" style="left:701px;top:582px"><svg width="13" height="14" viewBox="0 0 13 14"><path d="M2 3 C0 7 3 12 8 12 Z" fill="#fff" stroke="#000" stroke-width="1.3"/><path d="M4 13 L9 13" stroke="#000" stroke-width="1.5"/><path d="M5 8 L11 1" stroke="#e00" stroke-width="1.4"/><circle cx="6" cy="7" r="1.2" fill="#e00"/></svg></div>
<div class="t" style="left:716px;top:583px;color:#000;font-size:11px;">Zubehör</div>
<div class="btn" style="left:773px;top:579px;width:55px;height:17px;border-radius:5px"></div>
<div class="ico" style="left:783px;top:580px"><svg width="11" height="17" viewBox="0 0 11 17"><rect x="4.3" y="0" width="2.4" height="8" fill="#000"/><path d="M0.5 7 L10.5 7 L5.5 16 Z" fill="#ff0000" stroke="#000" stroke-width="0.8"/></svg></div>
<div class="t" style="left:797px;top:583px;color:#000;font-size:11px;">Maut</div>
<div class="btn" style="left:923px;top:579px;width:55px;height:17px;border-radius:5px"></div>
<div class="t" style="left:923px;top:583px;color:#000;font-size:11px;">Gutschein +</div>
<div class="t" style="left:994px;top:560px;color:#2d5682;font-size:11px;">Zahlart</div>
<div style="position:absolute;left:1051px;top:555px;width:108px;height:19px;border:1px solid #6b6b6b;background:#fff"></div>
<div style="position:absolute;left:1147px;top:562px;line-height:0"><svg width="9" height="6" viewBox="0 0 9 6"><path d="M1 1 L4.5 4.5 L8 1" stroke="#333" stroke-width="1.6" fill="none"/></svg></div>
<div class="t" style="left:1054px;top:559px;color:#2d5a88;font-size:11px;">Bar</div>
<div class="t" style="left:994px;top:585px;color:#2d5682;font-size:11px;">Kontoinh.</div>
<div style="position:absolute;left:1051px;top:581px;width:146px;height:17px;border:1px solid #9dbbd8;background:#fff"></div>
<div class="t" style="left:994px;top:610px;color:#2d5682;font-size:11px;">Vor.-Zahl.</div>
<div style="position:absolute;left:1051px;top:606px;width:77px;height:17px;border:1px solid #9dbbd8;background:#fff"></div>
<div class="t" style="right:125px;top:609px;color:#000;font-size:11px;">10,00 €</div>
<div class="btn" style="left:1133px;top:606px;width:64px;height:18px;border-radius:5px"></div>
<div class="t" style="left:866px;width:600px;text-align:center;top:611px;color:#000;font-size:11px;">Buchen(F8)</div>
<div class="t" style="left:994px;top:635px;color:#2d5682;font-size:11px;">Rabatt (%)</div>
<div style="position:absolute;left:1051px;top:631px;width:77px;height:17px;border:1px solid #9dbbd8;background:#fff"></div>
<div class="t" style="left:994px;top:660px;color:#2d5682;font-size:11px;">SB VK/TK/</div>
<div style="position:absolute;left:1051px;top:656px;width:60px;height:18px;border:1px solid #9dbbd8;background:#fff"></div>
<div class="t" style="right:142px;top:659px;color:#000;font-size:11px;">2.000,00 €</div>
<div style="position:absolute;left:1115px;top:656px;width:60px;height:18px;border:1px solid #9dbbd8;background:#fff"></div>
<div class="t" style="right:78px;top:659px;color:#000;font-size:11px;">0,00 €</div>
<div style="position:absolute;left:1179px;top:656px;width:60px;height:18px;border:1px solid #9dbbd8;background:#fff"></div>
<div class="t" style="right:14px;top:659px;color:#000;font-size:11px;">0,00 €</div>
<div style="position:absolute;left:996px;top:708px;width:11px;height:11px;border:1px solid #707070;background:#fff;border-radius:0px"></div>
<div class="t" style="left:1012px;top:709px;color:#2d5682;font-size:11px;">Pers. Ausw.</div>
<div style="position:absolute;left:1124px;top:708px;width:11px;height:11px;border:1px solid #707070;background:#fff;border-radius:0px"></div>
<div class="t" style="left:1140px;top:709px;color:#2d5682;font-size:11px;">Weitere Fah.</div>
<div style="position:absolute;left:996px;top:726px;width:11px;height:11px;border:1px solid #707070;background:#fff;border-radius:0px"></div>
<div class="t" style="left:1012px;top:727px;color:#2d5682;font-size:11px;">Führerschein</div>
<div style="position:absolute;left:12px;top:602px;width:972px;height:201px;background:#fff;border:1px solid #7c7c7c"></div>
<div style="position:absolute;left:13px;top:603px;width:955px;height:18px;background:#fbfbfb"></div>
<div style="position:absolute;left:24px;top:603px;width:2px;height:18px;background:#e6e6e6;border-right:0"></div>
<div style="position:absolute;left:62px;top:603px;width:2px;height:18px;background:#e6e6e6;border-right:0"></div>
<div style="position:absolute;left:162px;top:603px;width:2px;height:18px;background:#e6e6e6;border-right:0"></div>
<div style="position:absolute;left:189px;top:603px;width:2px;height:18px;background:#e6e6e6;border-right:0"></div>
<div style="position:absolute;left:317px;top:603px;width:2px;height:18px;background:#e6e6e6;border-right:0"></div>
<div style="position:absolute;left:365px;top:603px;width:2px;height:18px;background:#e6e6e6;border-right:0"></div>
<div style="position:absolute;left:430px;top:603px;width:2px;height:18px;background:#e6e6e6;border-right:0"></div>
<div style="position:absolute;left:473px;top:603px;width:2px;height:18px;background:#e6e6e6;border-right:0"></div>
<div style="position:absolute;left:549px;top:603px;width:2px;height:18px;background:#e6e6e6;border-right:0"></div>
<div style="position:absolute;left:619px;top:603px;width:2px;height:18px;background:#e6e6e6;border-right:0"></div>
<div style="position:absolute;left:646px;top:603px;width:2px;height:18px;background:#e6e6e6;border-right:0"></div>
<div style="position:absolute;left:731px;top:603px;width:2px;height:18px;background:#e6e6e6;border-right:0"></div>
<div style="position:absolute;left:775px;top:603px;width:2px;height:18px;background:#e6e6e6;border-right:0"></div>
<div style="position:absolute;left:881px;top:603px;width:2px;height:18px;background:#e6e6e6;border-right:0"></div>
<div style="position:absolute;left:927px;top:603px;width:2px;height:18px;background:#e6e6e6;border-right:0"></div>
<div class="t" style="left:28px;top:607px;color:#000;font-size:11px;">Pos</div>
<div class="t" style="left:66px;top:607px;color:#000;font-size:11px;">Tarif</div>
<div class="t" style="left:166px;top:607px;color:#000;font-size:11px;">Grp</div>
<div class="t" style="left:193px;top:607px;color:#000;font-size:11px;">Beschreibung</div>
<div class="t" style="left:321px;top:607px;color:#000;font-size:11px;">genutzt</div>
<div class="t" style="left:369px;top:607px;color:#000;font-size:11px;">berechnet</div>
<div class="t" style="left:434px;top:607px;color:#000;font-size:11px;">Einheit</div>
<div class="t" style="left:477px;top:607px;color:#000;font-size:11px;">Netto</div>
<div class="t" style="left:553px;top:607px;color:#000;font-size:11px;">Brutto</div>
<div class="t" style="left:623px;top:607px;color:#000;font-size:11px;">%</div>
<div class="t" style="left:650px;top:607px;color:#000;font-size:11px;">Gesamt</div>
<div class="t" style="left:735px;top:607px;color:#000;font-size:11px;">Kmfrei</div>
<div class="t" style="left:779px;top:607px;color:#000;font-size:11px;">ZusKM</div>
<div class="t" style="left:885px;top:607px;color:#000;font-size:11px;">ZusEinh</div>
<div class="t" style="left:931px;top:607px;color:#000;font-size:11px;">RE-K</div>
<div style="position:absolute;left:13px;top:621px;width:955px;height:1px;background:#e2e2e2"></div>
<div style="position:absolute;left:13px;top:622px;width:11px;height:18px;background:#f0f0f0"></div>
<div style="position:absolute;left:25px;top:622px;width:37px;height:18px;background:#efefef"></div>
<div style="position:absolute;left:63px;top:622px;width:99px;height:18px;background:#efefef"></div>
<div style="position:absolute;left:163px;top:622px;width:26px;height:18px;background:#efefef"></div>
<div style="position:absolute;left:190px;top:622px;width:127px;height:18px;background:#ffc8c8"></div>
<div style="position:absolute;left:318px;top:622px;width:47px;height:18px;background:#ffc8c8"></div>
<div style="position:absolute;left:366px;top:622px;width:64px;height:18px;background:#efefef"></div>
<div style="position:absolute;left:431px;top:622px;width:42px;height:18px;background:#efefef"></div>
<div style="position:absolute;left:474px;top:622px;width:75px;height:18px;background:#efefef"></div>
<div style="position:absolute;left:550px;top:622px;width:69px;height:18px;background:#efefef"></div>
<div style="position:absolute;left:620px;top:622px;width:26px;height:18px;background:#efefef"></div>
<div style="position:absolute;left:647px;top:622px;width:84px;height:18px;background:#ffc8c8"></div>
<div style="position:absolute;left:732px;top:622px;width:43px;height:18px;background:#efefef"></div>
<div style="position:absolute;left:776px;top:622px;width:105px;height:18px;background:#efefef"></div>
<div style="position:absolute;left:882px;top:622px;width:45px;height:18px;background:#efefef"></div>
<div style="position:absolute;left:928px;top:622px;width:39px;height:18px;background:#efefef"></div>
<div style="position:absolute;left:13px;top:640px;width:955px;height:1px;background:#a3a3a3"></div>
<div class="t" style="right:1192px;top:625px;color:#000;font-size:11px;">1</div>
<div style="position:absolute;left:65px;top:622px;width:97px;height:18px;overflow:hidden"><div class="t" style="left:0;top:3px;color:#000">[WEB]PMO4000</div></div>
<div style="position:absolute;left:165px;top:622px;width:24px;height:18px;overflow:hidden"><div class="t" style="left:0;top:3px;color:#000">B</div></div>
<div style="position:absolute;left:192px;top:622px;width:125px;height:18px;overflow:hidden"><div class="t" style="left:0;top:3px;color:#000">Monatstarif var. inkl. 4000</div></div>
<div class="t" style="right:889px;top:625px;color:#000;font-size:11px;">5,10</div>
<div class="t" style="right:824px;top:625px;color:#000;font-size:11px;">5,00</div>
<div style="position:absolute;left:433px;top:622px;width:40px;height:18px;overflow:hidden"><div class="t" style="left:0;top:3px;color:#000">Monat v</div></div>
<div class="t" style="right:705px;top:625px;color:#000;font-size:11px;">419,33 €</div>
<div class="t" style="right:635px;top:625px;color:#000;font-size:11px;">499,00 €</div>
<div class="t" style="right:523px;top:625px;color:#000;font-size:11px;">2.096,64 €</div>
<div class="t" style="right:479px;top:625px;color:#000;font-size:11px;">20100</div>
<div class="t" style="right:373px;top:625px;color:#000;font-size:11px;">0,20 €</div>
<div class="t" style="right:327px;top:625px;color:#000;font-size:11px;">25,00 €</div>
<div style="position:absolute;left:941px;top:624px;width:11px;height:11px;border:1px solid #5a5a5a;background:#fff;border-radius:0px"></div>
<div style="position:absolute;left:13px;top:641px;width:11px;height:18px;background:#f0f0f0"></div>
<div style="position:absolute;left:25px;top:641px;width:37px;height:18px;background:#ffffff"></div>
<div style="position:absolute;left:63px;top:641px;width:99px;height:18px;background:#ffffff"></div>
<div style="position:absolute;left:163px;top:641px;width:26px;height:18px;background:#ffffff"></div>
<div style="position:absolute;left:190px;top:641px;width:127px;height:18px;background:#ffffff"></div>
<div style="position:absolute;left:318px;top:641px;width:47px;height:18px;background:#ffd6d6"></div>
<div style="position:absolute;left:366px;top:641px;width:64px;height:18px;background:#ffffff"></div>
<div style="position:absolute;left:431px;top:641px;width:42px;height:18px;background:#ffffff"></div>
<div style="position:absolute;left:474px;top:641px;width:75px;height:18px;background:#ffffff"></div>
<div style="position:absolute;left:550px;top:641px;width:69px;height:18px;background:#ffffff"></div>
<div style="position:absolute;left:620px;top:641px;width:26px;height:18px;background:#ffffff"></div>
<div style="position:absolute;left:647px;top:641px;width:84px;height:18px;background:#ffd6d6"></div>
<div style="position:absolute;left:732px;top:641px;width:43px;height:18px;background:#ffffff"></div>
<div style="position:absolute;left:776px;top:641px;width:105px;height:18px;background:#ffffff"></div>
<div style="position:absolute;left:882px;top:641px;width:45px;height:18px;background:#ffffff"></div>
<div style="position:absolute;left:928px;top:641px;width:39px;height:18px;background:#ffffff"></div>
<div style="position:absolute;left:13px;top:659px;width:955px;height:1px;background:#a3a3a3"></div>
<div class="t" style="right:1192px;top:644px;color:#000;font-size:11px;">2</div>
<div style="position:absolute;left:65px;top:641px;width:97px;height:18px;overflow:hidden"><div class="t" style="left:0;top:3px;color:#000">ZUS</div></div>
<div style="position:absolute;left:165px;top:641px;width:24px;height:18px;overflow:hidden"><div class="t" style="left:0;top:3px;color:#000">B</div></div>
<div style="position:absolute;left:192px;top:641px;width:125px;height:18px;overflow:hidden"><div class="t" style="left:0;top:3px;color:#000">ZusatzTage</div></div>
<div class="t" style="right:889px;top:644px;color:#000;font-size:11px;">3,00</div>
<div class="t" style="right:824px;top:644px;color:#000;font-size:11px;">1,00</div>
<div style="position:absolute;left:433px;top:641px;width:40px;height:18px;overflow:hidden"><div class="t" style="left:0;top:3px;color:#000">Tage</div></div>
<div class="t" style="right:705px;top:644px;color:#000;font-size:11px;">25,00 €</div>
<div class="t" style="right:635px;top:644px;color:#000;font-size:11px;">29,75 €</div>
<div class="t" style="right:523px;top:644px;color:#000;font-size:11px;">25,00 €</div>
<div style="position:absolute;left:941px;top:643px;width:11px;height:11px;border:1px solid #5a5a5a;background:#fff;border-radius:0px"></div>
<div style="position:absolute;left:13px;top:660px;width:11px;height:18px;background:#f0f0f0"></div>
<div style="position:absolute;left:25px;top:660px;width:37px;height:18px;background:#efefef"></div>
<div style="position:absolute;left:63px;top:660px;width:99px;height:18px;background:#efefef"></div>
<div style="position:absolute;left:163px;top:660px;width:26px;height:18px;background:#efefef"></div>
<div style="position:absolute;left:190px;top:660px;width:127px;height:18px;background:#efefef"></div>
<div style="position:absolute;left:318px;top:660px;width:47px;height:18px;background:#ffc8c8"></div>
<div style="position:absolute;left:366px;top:660px;width:64px;height:18px;background:#efefef"></div>
<div style="position:absolute;left:431px;top:660px;width:42px;height:18px;background:#efefef"></div>
<div style="position:absolute;left:474px;top:660px;width:75px;height:18px;background:#efefef"></div>
<div style="position:absolute;left:550px;top:660px;width:69px;height:18px;background:#efefef"></div>
<div style="position:absolute;left:620px;top:660px;width:26px;height:18px;background:#efefef"></div>
<div style="position:absolute;left:647px;top:660px;width:84px;height:18px;background:#ffc8c8"></div>
<div style="position:absolute;left:732px;top:660px;width:43px;height:18px;background:#efefef"></div>
<div style="position:absolute;left:776px;top:660px;width:105px;height:18px;background:#efefef"></div>
<div style="position:absolute;left:882px;top:660px;width:45px;height:18px;background:#efefef"></div>
<div style="position:absolute;left:928px;top:660px;width:39px;height:18px;background:#efefef"></div>
<div style="position:absolute;left:13px;top:678px;width:955px;height:1px;background:#a3a3a3"></div>
<div class="t" style="right:1192px;top:663px;color:#000;font-size:11px;">3</div>
<div style="position:absolute;left:65px;top:660px;width:97px;height:18px;overflow:hidden"><div class="t" style="left:0;top:3px;color:#000">[NORMAL]GAP</div></div>
<div style="position:absolute;left:165px;top:660px;width:24px;height:18px;overflow:hidden"><div class="t" style="left:0;top:3px;color:#000">*</div></div>
<div style="position:absolute;left:192px;top:660px;width:125px;height:18px;overflow:hidden"><div class="t" style="left:0;top:3px;color:#000">Aufwendungspauschale</div></div>
<div class="t" style="right:889px;top:663px;color:#000;font-size:11px;">0,00</div>
<div class="t" style="right:824px;top:663px;color:#000;font-size:11px;">1,00</div>
<div style="position:absolute;left:433px;top:660px;width:40px;height:18px;overflow:hidden"><div class="t" style="left:0;top:3px;color:#000">X</div></div>
<div class="t" style="right:327px;top:663px;color:#000;font-size:11px;">0,00 €</div>
<div style="position:absolute;left:941px;top:662px;width:11px;height:11px;border:1px solid #5a5a5a;background:#fff;border-radius:0px"></div>
<div style="position:absolute;left:13px;top:679px;width:11px;height:18px;background:#f0f0f0"></div>
<div style="position:absolute;left:25px;top:679px;width:37px;height:18px;background:#3a98fa"></div>
<div style="position:absolute;left:63px;top:679px;width:99px;height:18px;background:#3a98fa"></div>
<div style="position:absolute;left:163px;top:679px;width:26px;height:18px;background:#3a98fa"></div>
<div style="position:absolute;left:190px;top:679px;width:127px;height:18px;background:#3a98fa"></div>
<div style="position:absolute;left:318px;top:679px;width:47px;height:18px;background:#3a98fa"></div>
<div style="position:absolute;left:366px;top:679px;width:64px;height:18px;background:#3a98fa"></div>
<div style="position:absolute;left:431px;top:679px;width:42px;height:18px;background:#3a98fa"></div>
<div style="position:absolute;left:474px;top:679px;width:75px;height:18px;background:#3a98fa"></div>
<div style="position:absolute;left:550px;top:679px;width:69px;height:18px;background:#3a98fa"></div>
<div style="position:absolute;left:620px;top:679px;width:26px;height:18px;background:#3a98fa"></div>
<div style="position:absolute;left:647px;top:679px;width:84px;height:18px;background:#3a98fa"></div>
<div style="position:absolute;left:732px;top:679px;width:43px;height:18px;background:#3a98fa"></div>
<div style="position:absolute;left:776px;top:679px;width:105px;height:18px;background:#3a98fa"></div>
<div style="position:absolute;left:882px;top:679px;width:45px;height:18px;background:#3a98fa"></div>
<div style="position:absolute;left:928px;top:679px;width:39px;height:18px;background:#ffffff"></div>
<div style="position:absolute;left:13px;top:697px;width:955px;height:1px;background:#a3a3a3"></div>
<div class="t" style="right:1192px;top:682px;color:#fff;font-size:11px;">4</div>
<div style="position:absolute;left:65px;top:679px;width:97px;height:18px;overflow:hidden"><div class="t" style="left:0;top:3px;color:#fff">BET</div></div>
<div style="position:absolute;left:165px;top:679px;width:24px;height:18px;overflow:hidden"><div class="t" style="left:0;top:3px;color:#fff">*</div></div>
<div style="position:absolute;left:192px;top:679px;width:125px;height:18px;overflow:hidden"><div class="t" style="left:0;top:3px;color:#fff">Betankung (nicht löschen)</div></div>
<div class="t" style="right:824px;top:682px;color:#fff;font-size:11px;">20,00</div>
<div style="position:absolute;left:433px;top:679px;width:40px;height:18px;overflow:hidden"><div class="t" style="left:0;top:3px;color:#fff">Liter</div></div>
<div class="t" style="right:705px;top:682px;color:#fff;font-size:11px;">1,90 €</div>
<div class="t" style="right:635px;top:682px;color:#fff;font-size:11px;">2,26 €</div>
<div class="t" style="right:523px;top:682px;color:#fff;font-size:11px;">38,00 €</div>
<div style="position:absolute;left:941px;top:681px;width:11px;height:11px;border:1px solid #5a5a5a;background:#fff;border-radius:0px"></div>
<div style="position:absolute;left:13px;top:698px;width:11px;height:18px;background:#f0f0f0"></div>
<div style="position:absolute;left:25px;top:698px;width:37px;height:18px;background:#ffc8c8"></div>
<div style="position:absolute;left:63px;top:698px;width:99px;height:18px;background:#ffc8c8"></div>
<div style="position:absolute;left:163px;top:698px;width:26px;height:18px;background:#ffc8c8"></div>
<div style="position:absolute;left:190px;top:698px;width:127px;height:18px;background:#ffc8c8"></div>
<div style="position:absolute;left:318px;top:698px;width:47px;height:18px;background:#ffc8c8"></div>
<div style="position:absolute;left:366px;top:698px;width:64px;height:18px;background:#ffc8c8"></div>
<div style="position:absolute;left:431px;top:698px;width:42px;height:18px;background:#ffc8c8"></div>
<div style="position:absolute;left:474px;top:698px;width:75px;height:18px;background:#ffc8c8"></div>
<div style="position:absolute;left:550px;top:698px;width:69px;height:18px;background:#ffc8c8"></div>
<div style="position:absolute;left:620px;top:698px;width:26px;height:18px;background:#ffc8c8"></div>
<div style="position:absolute;left:647px;top:698px;width:84px;height:18px;background:#ffc8c8"></div>
<div style="position:absolute;left:732px;top:698px;width:43px;height:18px;background:#ffc8c8"></div>
<div style="position:absolute;left:776px;top:698px;width:105px;height:18px;background:#ffc8c8"></div>
<div style="position:absolute;left:882px;top:698px;width:45px;height:18px;background:#ffc8c8"></div>
<div style="position:absolute;left:928px;top:698px;width:39px;height:18px;background:#ffc8c8"></div>
<div style="position:absolute;left:13px;top:716px;width:955px;height:1px;background:#a3a3a3"></div>
<div class="t" style="right:1192px;top:701px;color:#000;font-size:11px;">99991</div>
<div style="position:absolute;left:65px;top:698px;width:97px;height:18px;overflow:hidden"><div class="t" style="left:0;top:3px;color:#000">NS.</div></div>
<div style="position:absolute;left:192px;top:698px;width:125px;height:18px;overflow:hidden"><div class="t" style="left:0;top:3px;color:#000">Nettosumme</div></div>
<div class="t" style="right:523px;top:701px;color:#000;font-size:11px;">2.159,64 €</div>
<div style="position:absolute;left:941px;top:700px;width:11px;height:11px;border:1px solid #5a5a5a;background:#fff;border-radius:0px"></div>
<div style="position:absolute;left:13px;top:717px;width:11px;height:18px;background:#f0f0f0"></div>
<div style="position:absolute;left:25px;top:717px;width:37px;height:18px;background:#ffd6d6"></div>
<div style="position:absolute;left:63px;top:717px;width:99px;height:18px;background:#ffd6d6"></div>
<div style="position:absolute;left:163px;top:717px;width:26px;height:18px;background:#ffd6d6"></div>
<div style="position:absolute;left:190px;top:717px;width:127px;height:18px;background:#ffd6d6"></div>
<div style="position:absolute;left:318px;top:717px;width:47px;height:18px;background:#ffd6d6"></div>
<div style="position:absolute;left:366px;top:717px;width:64px;height:18px;background:#ffd6d6"></div>
<div style="position:absolute;left:431px;top:717px;width:42px;height:18px;background:#ffd6d6"></div>
<div style="position:absolute;left:474px;top:717px;width:75px;height:18px;background:#ffd6d6"></div>
<div style="position:absolute;left:550px;top:717px;width:69px;height:18px;background:#ffd6d6"></div>
<div style="position:absolute;left:620px;top:717px;width:26px;height:18px;background:#ffd6d6"></div>
<div style="position:absolute;left:647px;top:717px;width:84px;height:18px;background:#ffd6d6"></div>
<div style="position:absolute;left:732px;top:717px;width:43px;height:18px;background:#ffd6d6"></div>
<div style="position:absolute;left:776px;top:717px;width:105px;height:18px;background:#ffd6d6"></div>
<div style="position:absolute;left:882px;top:717px;width:45px;height:18px;background:#ffd6d6"></div>
<div style="position:absolute;left:928px;top:717px;width:39px;height:18px;background:#ffd6d6"></div>
<div style="position:absolute;left:13px;top:735px;width:955px;height:1px;background:#a3a3a3"></div>
<div class="t" style="right:1192px;top:720px;color:#000;font-size:11px;">99992</div>
<div style="position:absolute;left:65px;top:717px;width:97px;height:18px;overflow:hidden"><div class="t" style="left:0;top:3px;color:#000">USt.</div></div>
<div style="position:absolute;left:192px;top:717px;width:125px;height:18px;overflow:hidden"><div class="t" style="left:0;top:3px;color:#000">Umsatzsteuer&nbsp; 19 %</div></div>
<div class="t" style="right:705px;top:720px;color:#000;font-size:11px;">2.159,64 €</div>
<div style="position:absolute;left:622px;top:717px;width:24px;height:18px;overflow:hidden"><div class="t" style="left:0;top:3px;color:#000">19,0</div></div>
<div class="t" style="right:523px;top:720px;color:#000;font-size:11px;">410,33 €</div>
<div style="position:absolute;left:941px;top:719px;width:11px;height:11px;border:1px solid #5a5a5a;background:#fff;border-radius:0px"></div>
<div style="position:absolute;left:13px;top:736px;width:11px;height:18px;background:#f0f0f0"></div>
<div style="position:absolute;left:25px;top:736px;width:37px;height:18px;background:#ffc8c8"></div>
<div style="position:absolute;left:63px;top:736px;width:99px;height:18px;background:#ffc8c8"></div>
<div style="position:absolute;left:163px;top:736px;width:26px;height:18px;background:#ffc8c8"></div>
<div style="position:absolute;left:190px;top:736px;width:127px;height:18px;background:#ffc8c8"></div>
<div style="position:absolute;left:318px;top:736px;width:47px;height:18px;background:#ffc8c8"></div>
<div style="position:absolute;left:366px;top:736px;width:64px;height:18px;background:#ffc8c8"></div>
<div style="position:absolute;left:431px;top:736px;width:42px;height:18px;background:#ffc8c8"></div>
<div style="position:absolute;left:474px;top:736px;width:75px;height:18px;background:#ffc8c8"></div>
<div style="position:absolute;left:550px;top:736px;width:69px;height:18px;background:#ffc8c8"></div>
<div style="position:absolute;left:620px;top:736px;width:26px;height:18px;background:#ffc8c8"></div>
<div style="position:absolute;left:647px;top:736px;width:84px;height:18px;background:#ffc8c8"></div>
<div style="position:absolute;left:732px;top:736px;width:43px;height:18px;background:#ffc8c8"></div>
<div style="position:absolute;left:776px;top:736px;width:105px;height:18px;background:#ffc8c8"></div>
<div style="position:absolute;left:882px;top:736px;width:45px;height:18px;background:#ffc8c8"></div>
<div style="position:absolute;left:928px;top:736px;width:39px;height:18px;background:#ffc8c8"></div>
<div style="position:absolute;left:13px;top:754px;width:955px;height:1px;background:#a3a3a3"></div>
<div class="t" style="right:1192px;top:739px;color:#000;font-size:11px;">99993</div>
<div style="position:absolute;left:65px;top:736px;width:97px;height:18px;overflow:hidden"><div class="t" style="left:0;top:3px;color:#000">ES.</div></div>
<div style="position:absolute;left:192px;top:736px;width:125px;height:18px;overflow:hidden"><div class="t" style="left:0;top:3px;color:#000">Endsumme</div></div>
<div class="t" style="right:523px;top:739px;color:#000;font-size:11px;">2.569,97 €</div>
<div style="position:absolute;left:941px;top:738px;width:11px;height:11px;border:1px solid #5a5a5a;background:#fff;border-radius:0px"></div>
<div style="position:absolute;left:24px;top:622px;width:1px;height:132px;background:#a3a3a3"></div>
<div style="position:absolute;left:62px;top:622px;width:1px;height:132px;background:#a3a3a3"></div>
<div style="position:absolute;left:162px;top:622px;width:1px;height:132px;background:#a3a3a3"></div>
<div style="position:absolute;left:189px;top:622px;width:1px;height:132px;background:#a3a3a3"></div>
<div style="position:absolute;left:317px;top:622px;width:1px;height:132px;background:#a3a3a3"></div>
<div style="position:absolute;left:365px;top:622px;width:1px;height:132px;background:#a3a3a3"></div>
<div style="position:absolute;left:430px;top:622px;width:1px;height:132px;background:#a3a3a3"></div>
<div style="position:absolute;left:473px;top:622px;width:1px;height:132px;background:#a3a3a3"></div>
<div style="position:absolute;left:549px;top:622px;width:1px;height:132px;background:#a3a3a3"></div>
<div style="position:absolute;left:619px;top:622px;width:1px;height:132px;background:#a3a3a3"></div>
<div style="position:absolute;left:646px;top:622px;width:1px;height:132px;background:#a3a3a3"></div>
<div style="position:absolute;left:731px;top:622px;width:1px;height:132px;background:#a3a3a3"></div>
<div style="position:absolute;left:775px;top:622px;width:1px;height:132px;background:#a3a3a3"></div>
<div style="position:absolute;left:881px;top:622px;width:1px;height:132px;background:#a3a3a3"></div>
<div style="position:absolute;left:927px;top:622px;width:1px;height:132px;background:#a3a3a3"></div>
<div style="position:absolute;left:967px;top:622px;width:1px;height:132px;background:#a3a3a3"></div>
<div style="position:absolute;left:25px;top:679px;width:941px;height:16px;border:1px dotted #c07020;border-right:0"></div>
<div style="position:absolute;left:13px;top:679px;width:9px;height:16px;background:#efefef;border:1px solid #fff"></div>
<div class="ico" style="left:16px;top:684px"><svg width="6" height="9" viewBox="0 0 6 9" shape-rendering="crispEdges"><rect x="0" y="0" width="2" height="1" fill="#000"/><rect x="3" y="0" width="2" height="1" fill="#000"/><rect x="2" y="1" width="1" height="7" fill="#000"/><rect x="0" y="8" width="2" height="1" fill="#000"/><rect x="3" y="8" width="2" height="1" fill="#000"/></svg></div>
<div class="ico" style="left:943px;top:682px"><svg width="9" height="9" viewBox="0 0 9 9"><path d="M1 4.5 L3.5 7.5 L8 1" stroke="#000" stroke-width="1.9" fill="none"/></svg></div>
<div style="position:absolute;left:968px;top:603px;width:16px;height:182px;background:#fff;border-left:1px solid #c8c8c8"></div>
<div style="position:absolute;left:969px;top:603px;width:16px;height:17px;background:#fff;border-bottom:1px solid #d4d4d4"></div>
<div class="ico" style="left:972px;top:609px"><svg width="10" height="6" viewBox="0 0 10 6"><path d="M1 5 L5 1 L9 5" stroke="#555" stroke-width="1.3" fill="none"/></svg></div>
<div style="position:absolute;left:969px;top:654px;width:16px;height:79px;background:#dadada"></div>
<div class="ico" style="left:972px;top:690px"><svg width="10" height="8" viewBox="0 0 10 8"><path d="M1 1.5 H9 M1 4 H9 M1 6.5 H9" stroke="#666" stroke-width="1.2"/></svg></div>
<div style="position:absolute;left:969px;top:768px;width:16px;height:17px;background:#fff;border-top:1px solid #d4d4d4"></div>
<div class="ico" style="left:972px;top:774px"><svg width="10" height="6" viewBox="0 0 10 6"><path d="M1 1 L5 5 L9 1" stroke="#555" stroke-width="1.3" fill="none"/></svg></div>
<div style="position:absolute;left:13px;top:785px;width:955px;height:19px;background:#f0f0f0"></div>
<div style="position:absolute;left:14px;top:786px;width:14px;height:15px;border:1px solid #6e6e6e;background:#dcdcdc"></div>
<div style="position:absolute;left:32px;top:786px;width:14px;height:15px;border:1px solid #6e6e6e;background:#dcdcdc"></div>
<div style="position:absolute;left:50px;top:786px;width:14px;height:15px;border:1px solid #6e6e6e;background:#dcdcdc"></div>
<div style="position:absolute;left:68px;top:786px;width:14px;height:15px;border:1px solid #6e6e6e;background:#dcdcdc"></div>
<div class="ico" style="left:16px;top:788px"><svg width="11" height="11" viewBox="0 0 11 11"><path d="M5.5 1 V10 M1 5.5 H10" stroke="#1a9a1a" stroke-width="2.2"/></svg></div>
<div class="ico" style="left:34px;top:788px"><svg width="11" height="11" viewBox="0 0 11 11"><path d="M1 5.5 H10" stroke="#d02020" stroke-width="2.2"/></svg></div>
<div class="ico" style="left:52px;top:788px"><svg width="11" height="11" viewBox="0 0 11 11"><path d="M1.5 5.5 L4 8.5 L9.5 2.5" stroke="#20a020" stroke-width="2.2" fill="none"/></svg></div>
<div class="ico" style="left:70px;top:788px"><svg width="11" height="11" viewBox="0 0 11 11"><path d="M1.5 1.5 L9.5 9.5 M9.5 1.5 L1.5 9.5" stroke="#d02020" stroke-width="2.2"/></svg></div>
<div style="position:absolute;left:135px;top:785px;width:833px;height:18px;background:#fff;border-left:1px solid #c8c8c8;border-top:1px solid #c8c8c8"></div>
<div style="position:absolute;left:151px;top:786px;width:1px;height:17px;background:#d0d0d0"></div>
<div style="position:absolute;left:951px;top:786px;width:1px;height:17px;background:#d0d0d0"></div>
<div class="ico" style="left:141px;top:790px"><svg width="6" height="10" viewBox="0 0 6 10"><path d="M5 1 L1 5 L5 9" stroke="#666" stroke-width="1.3" fill="none"/></svg></div>
<div class="ico" style="left:957px;top:790px"><svg width="6" height="10" viewBox="0 0 6 10"><path d="M1 1 L5 5 L1 9" stroke="#666" stroke-width="1.3" fill="none"/></svg></div>
<div style="position:absolute;left:968px;top:785px;width:16px;height:18px;background:#f0f0f0;border-left:1px solid #d0d0d0;border-top:1px solid #d0d0d0"></div>
<div class="ico" style="left:800px;top:660px"><svg width="115" height="58" viewBox="0 0 115 58"><path d="M6 17 L56 17 L56 4 L107 29 L56 54 L56 41 L6 41 Z" fill="none" stroke="#e01a24" stroke-width="3.2" stroke-linejoin="miter"/></svg></div>
<div style="position:absolute;left:926px;top:676px;width:35px;height:17px;border:3px solid #e01a24"></div>
</body></html>
